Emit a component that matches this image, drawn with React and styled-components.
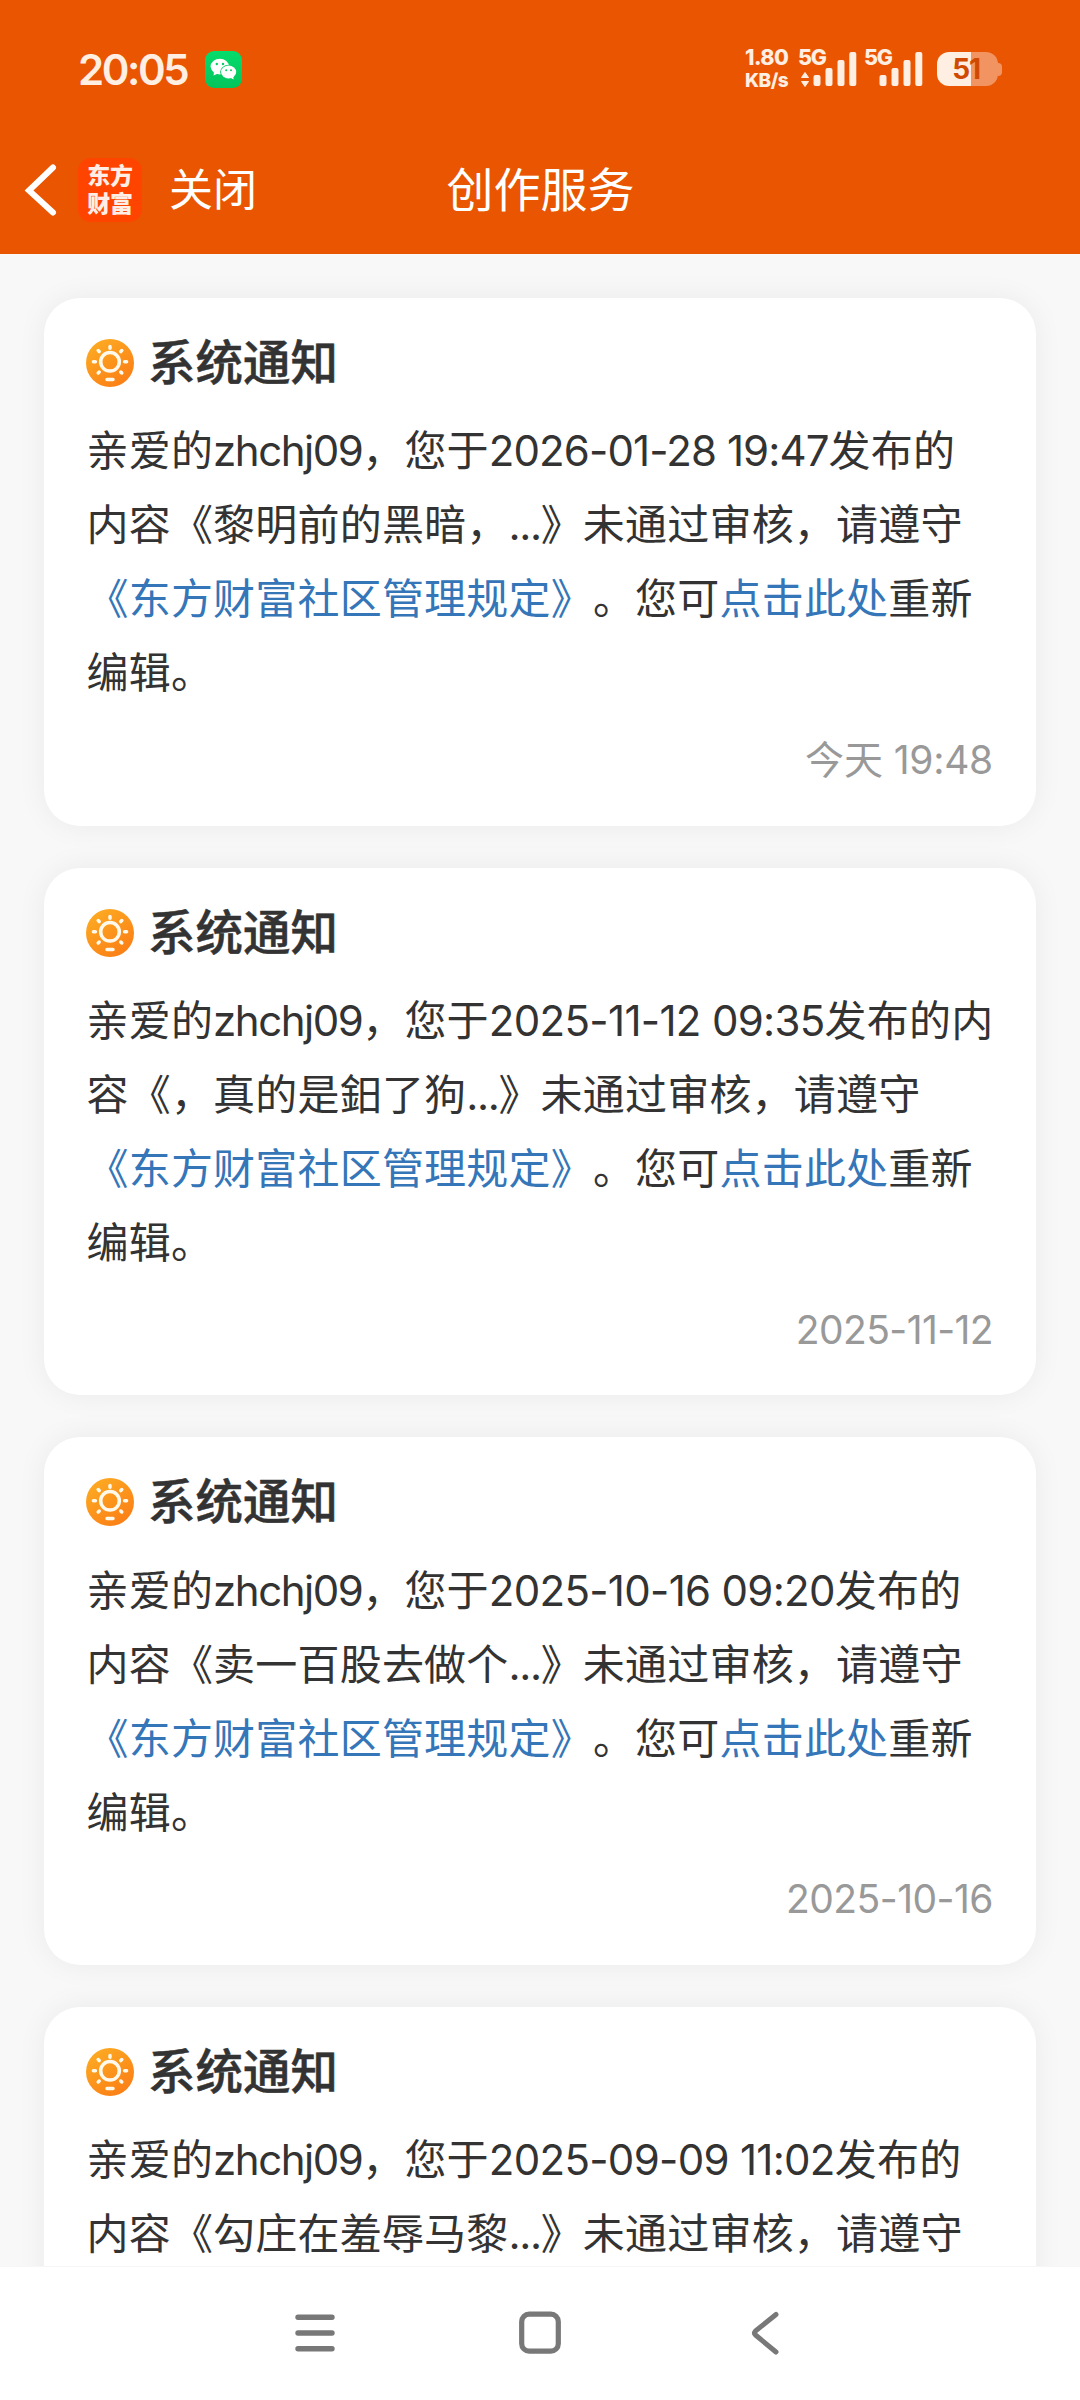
import React from "react";
import styled, { createGlobalStyle } from "styled-components";

const GlobalStyle = createGlobalStyle`
  * { box-sizing: border-box; }
  body {
    margin: 0;
    background: #f8f8f8;
    font-family: Inter, "Noto Sans CJK SC", sans-serif;
    text-spacing-trim: space-all;
  }
`;

const Screen = styled.div`
  width: 1080px;
  height: 2400px;
  display: flex;
  flex-direction: column;
  overflow: hidden;
  background: #f8f8f8;
`;

const Header = styled.header`
  flex: none;
  height: 254px;
  background: #e95500;
  display: flex;
  flex-direction: column;
`;

const StatusBar = styled.div`
  height: 138px;
  padding: 0 78px 0 78px;
  display: flex;
  align-items: center;
  color: #ffeee2;
`;

const Clock = styled.span`
  font-size: 42px;
  font-weight: 600;
  letter-spacing: -2.4px;
  line-height: 48px;
  width: 127px;
  padding-top: 1px;
`;

const StatusIcons = styled.div`
  margin-left: auto;
  height: 40px;
  display: flex;
  align-items: flex-start;
`;

const NetSpeed = styled.div`
  width: 53px;
  margin-top: -4px;
  display: flex;
  flex-direction: column;
  font-weight: 800;
  font-size: 21.5px;
  line-height: 24px;
  letter-spacing: -0.6px;
`;

const SpeedUnit = styled.span`
  font-size: 19px;
  line-height: 23px;
  letter-spacing: -0.5px;
`;

const Signal = styled.div`
  width: ${(p) => p.$width}px;
  display: flex;
  align-items: flex-start;
`;

const NetType = styled.span`
  flex: none;
  width: 28px;
  margin-top: -4px;
  font-weight: 800;
  font-size: 21.5px;
  line-height: 24px;
  letter-spacing: -1.2px;
`;

const BarsSvg = styled.svg`
  flex: none;
  margin-left: ${(p) => p.$pull}px;
`;

const Battery = styled.div`
  display: flex;
  align-items: center;
  height: 34px;
  margin-top: 3px;
`;

const BatteryBody = styled.div`
  width: 61px;
  height: 34px;
  border-radius: 12px;
  background: linear-gradient(90deg, #ffeee2 0 34px, #f29462 34px);
  display: flex;
  align-items: center;
  justify-content: center;
  padding-right: 3px;
  font-size: 28px;
  font-weight: 700;
  letter-spacing: -1.2px;
  color: #cf4a00;
`;

const BatteryTip = styled.div`
  width: 4px;
  height: 13px;
  border-radius: 0 4px 4px 0;
  background: #f29462;
`;

const TitleBar = styled.div`
  height: 104px;
  display: grid;
  grid-template-columns: 1fr auto 1fr;
  align-items: center;
  color: #fff;
`;

const TitleLeft = styled.div`
  display: flex;
  align-items: center;
  padding-left: 23px;
`;

const AppLogo = styled.div`
  width: 64px;
  height: 64px;
  margin-left: 20px;
  border-radius: 13px;
  background: #ff4400;
  display: grid;
  place-content: center;
  justify-items: center;
  font-size: 23px;
  line-height: 28px;
  font-weight: 800;
  letter-spacing: -0.3px;
  color: #ffeee6;
`;

const CloseButton = styled.span`
  margin-left: 27px;
  font-size: 44px;
  line-height: 60px;
`;

const PageTitle = styled.h1`
  margin: 0;
  padding-left: 1px;
  font-size: 47px;
  line-height: 60px;
  font-weight: 400;
`;

const Feed = styled.main`
  flex: 1;
  min-height: 0;
  overflow: hidden;
  display: flex;
  flex-direction: column;
  gap: 42px;
  padding: 44px 44px 0;
`;

const Card = styled.article`
  flex: none;
  height: 527.67px;
  padding: 41px 43px 0 42.5px;
  border-radius: 36px;
  background: #fff;
  box-shadow: 0 0 30px rgba(0, 0, 0, 0.06);
`;

const CardHead = styled.div`
  height: 48px;
  display: flex;
  align-items: center;
  gap: 14px;
  margin-left: -0.5px;
`;

const CardTitle = styled.h2`
  margin: 0;
  font-size: 47.5px;
  line-height: 48px;
  font-weight: 500;
  -webkit-text-stroke: 0.5px #333;
  color: #333;
`;

const Message = styled.div`
  margin-top: 27.3px;
  font-size: 42px;
  line-height: 74px;
  letter-spacing: 0.2px;
  color: #333;
`;

const Line = styled.div`
  height: 74px;
  white-space: nowrap;
`;

const Run = styled.span`
  letter-spacing: ${(p) => p.$track}px;
  white-space: pre;
`;

const Link = styled.a`
  color: #3476b8;
`;

const DateText = styled.div`
  margin-top: 24.7px;
  height: 50px;
  line-height: 50px;
  font-size: 39px;
  color: #999;
  text-align: right;
`;

const NavBar = styled.nav`
  flex: none;
  height: 134px;
  border-top: 1px solid #f7f7f7;
  background: #fff;
  display: flex;
  align-items: center;
  justify-content: center;
  gap: 171px;
  padding-bottom: 1px;
`;

function WeChatIcon() {
  return (
    <svg width="37" height="37" viewBox="0 0 37 37">
      <defs>
        <linearGradient id="wx" x1="0" y1="0" x2="0" y2="1">
          <stop offset="0" stopColor="#05dc6c" />
          <stop offset="1" stopColor="#04c45c" />
        </linearGradient>
      </defs>
      <rect width="37" height="37" rx="9" fill="url(#wx)" />
      <ellipse cx="14.8" cy="15.6" rx="9.2" ry="7.8" fill="#fff" />
      <path d="M9 20l-.4 4.6 5-2.4z" fill="#fff" />
      <ellipse cx="23.6" cy="21" rx="8.5" ry="7.2" fill="#04cf63" />
      <ellipse cx="23.6" cy="21" rx="7.6" ry="6.4" fill="#fff" />
      <path d="M25 26.6l3.6 1.8-.4-3.6z" fill="#fff" />
      <circle cx="11.8" cy="13" r="1.2" fill="#04cf63" />
      <circle cx="18" cy="13" r="1.2" fill="#04cf63" />
      <circle cx="21.2" cy="19.2" r="1" fill="#04cf63" />
      <circle cx="26" cy="19.2" r="1" fill="#04cf63" />
    </svg>
  );
}

function SignalBars({ arrows }) {
  return (
    <BarsSvg width="57" height="40" viewBox="0 0 57 40" $pull={-26}>
      {arrows && (
        <g fill="#ffeee2" stroke="#ffeee2" strokeWidth="1" strokeLinejoin="round">
          <path d="M1.5 28.5h7L5 23.5z" />
          <path d="M1.5 32.5h7L5 37.5z" />
        </g>
      )}
      <g fill="#ffeee2">
        <rect x="13.5" y="26" width="7" height="11" rx="2" />
        <rect x="25.5" y="19" width="7" height="18" rx="2" />
        <rect x="37.5" y="11" width="7" height="26" rx="2" />
        <rect x="49.3" y="3" width="7" height="34" rx="2" />
      </g>
    </BarsSvg>
  );
}

function BackArrow() {
  return (
    <svg width="35" height="56" viewBox="0 0 35 56" fill="none">
      <path d="M30 5.5L6 28.5l24 22" stroke="#fff" strokeWidth="6" strokeLinecap="round" />
    </svg>
  );
}

function NoticeIcon() {
  return (
    <svg width="48" height="48" viewBox="0 0 48 48">
      <defs>
        <linearGradient id="sun" x1="0" y1="0" x2="0.7" y2="1">
          <stop offset="0" stopColor="#fdb024" />
          <stop offset="1" stopColor="#fb7f16" />
        </linearGradient>
      </defs>
      <circle cx="24" cy="24" r="24" fill="url(#sun)" />
      <g stroke="#fff9ec" strokeLinecap="round" fill="none" strokeWidth="3.5">
        <circle cx="24" cy="22.8" r="9.3" />
        <path d="M24 7.6v1.6M7.4 22.8H9.4M38.6 22.8h2M12.2 11.6l1 1M35.8 11.6l-1 1M12.2 34l1-1M35.8 34l-1-1M21 40.6h6" />
      </g>
    </svg>
  );
}

function MenuIcon() {
  return (
    <svg width="42" height="46" viewBox="0 0 42 46" stroke="#787878" strokeWidth="5.4" strokeLinecap="round">
      <path d="M4 7.2h34M4 23h34M4 38.8h34" />
    </svg>
  );
}

function HomeIcon() {
  return (
    <svg width="66" height="46" viewBox="0 0 66 46" fill="none">
      <rect x="14.7" y="4.2" width="36.6" height="37" rx="7.5" stroke="#787878" strokeWidth="5.2" />
    </svg>
  );
}

function BackIcon() {
  return (
    <svg width="42" height="46" viewBox="0 0 42 46" fill="none">
      <path d="M32 4.5L11.5 21q-2 2 0 4L32 42" stroke="#787878" strokeWidth="5" strokeLinecap="round" strokeLinejoin="round" />
    </svg>
  );
}

const notices = [
  {
    first: ["2026-01-28 19:47", -0.9, "发布的"],
    second: "内容《黎明前的黑暗，",
    date: ["今天", " 19:48", -0.25],
  },
  {
    first: ["2025-11-12 09:35", -0.68, "发布的内"],
    second: "容《，真的是鈤了狗",
    date: ["", "2025-11-12", -0.6],
  },
  {
    first: ["2025-10-16 09:20", -0.7, "发布的"],
    second: "内容《卖一百股去做个",
    date: ["", "2025-10-16", -0.52],
  },
  {
    first: ["2025-09-09 11:02", -0.7, "发布的"],
    second: "内容《勾庄在羞辱马黎",
    date: ["", "2025-09-09", -0.52],
  },
];

function Notice({ first, second, date }) {
  return (
    <Card>
      <CardHead>
        <NoticeIcon />
        <CardTitle>系统通知</CardTitle>
      </CardHead>
      <Message>
        <Line>
          亲爱的<Run $track={-1.5}>zhchj09</Run>，您于
          <Run $track={first[1]}>{first[0]}</Run>
          {first[2]}
        </Line>
        <Line>
          {second}
          <Run $track={-1.4}>...</Run>》未通过审核，请遵守
        </Line>
        <Line>
          <Link>《东方财富社区管理规定》</Link>。您可<Link>点击此处</Link>重新
        </Line>
        <Line>编辑。</Line>
      </Message>
      <DateText>
        {date[0]}
        <Run $track={date[2]}>{date[1]}</Run>
      </DateText>
    </Card>
  );
}

export default function App() {
  return (
    <Screen>
      <GlobalStyle />
      <Header>
        <StatusBar>
          <Clock>20:05</Clock>
          <WeChatIcon />
          <StatusIcons>
            <NetSpeed>
              <span>1.80</span>
              <SpeedUnit>KB/s</SpeedUnit>
            </NetSpeed>
            <Signal $width={66}>
              <NetType>5G</NetType>
              <SignalBars arrows />
            </Signal>
            <Signal $width={73}>
              <NetType>5G</NetType>
              <SignalBars />
            </Signal>
            <Battery>
              <BatteryBody>51</BatteryBody>
              <BatteryTip />
            </Battery>
          </StatusIcons>
        </StatusBar>
        <TitleBar>
          <TitleLeft>
            <BackArrow />
            <AppLogo>
              <span>东方</span>
              <span>财富</span>
            </AppLogo>
            <CloseButton>关闭</CloseButton>
          </TitleLeft>
          <PageTitle>创作服务</PageTitle>
        </TitleBar>
      </Header>
      <Feed>
        {notices.map((n) => (
          <Notice key={n.second} {...n} />
        ))}
      </Feed>
      <NavBar>
        <MenuIcon />
        <HomeIcon />
        <BackIcon />
      </NavBar>
    </Screen>
  );
}
